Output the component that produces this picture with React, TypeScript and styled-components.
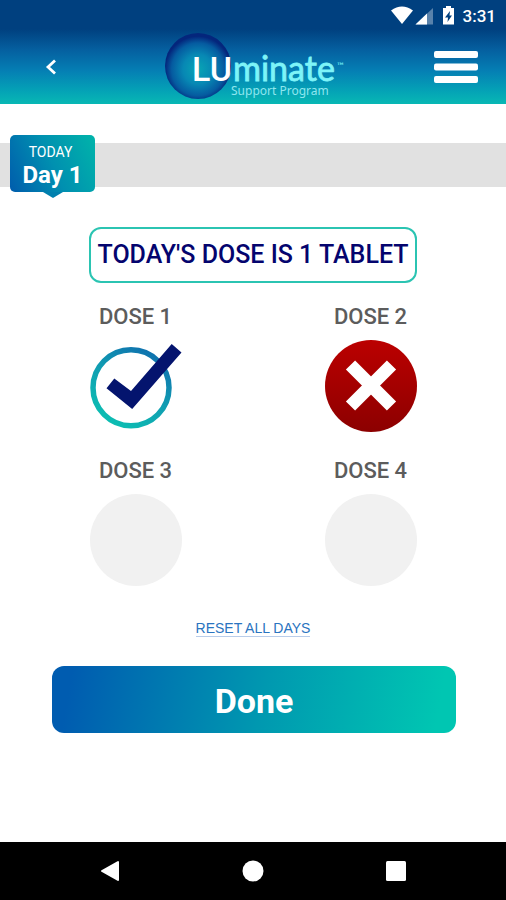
import React from "react";
import styled, { createGlobalStyle } from "styled-components";

const GlobalStyle = createGlobalStyle`
  *, *::before, *::after { box-sizing: border-box; }
  body { margin: 0; background: #fff; font-family: Roboto, sans-serif; }
  button { font-family: inherit; border: 0; padding: 0; background: none; cursor: pointer; }
`;

const Screen = styled.div`
  display: flex;
  flex-direction: column;
  min-height: 100vh;
`;

const Header = styled.header`
  background: linear-gradient(180deg, #00407f 0%, #00407f 28%, #0560a0 48%, #057fb4 68%, #04a0b6 86%, #08b8b4 100%);
`;

const StatusBar = styled.div`
  display: flex;
  justify-content: flex-end;
  align-items: center;
  height: 32px;
  padding-right: 10px;
  color: #fff;
  font-size: 17px;
  font-weight: 500;
  line-height: 32px;
`;

const StatusIcons = styled.svg`
  display: block;
  margin-right: 8px;
`;

const AppBar = styled.div`
  display: grid;
  grid-template-columns: 1fr auto 1fr;
  align-items: center;
  height: 72px;
  padding: 0 28px 2px 36px;
`;

const IconButton = styled.button<{ $end?: boolean }>`
  display: flex;
  justify-self: ${(p) => (p.$end ? "end" : "start")};
`;

const Logo = styled.svg`
  display: block;
`;

const Main = styled.main`
  display: flex;
  flex-direction: column;
  flex: 1;
`;

const DayStrip = styled.div`
  display: flex;
  align-items: flex-start;
  height: 44px;
  margin-top: 39px;
  padding-left: 10px;
  background: #e1e1e1;
`;

const DayTag = styled.button`
  position: relative;
  width: 85px;
  height: 57px;
  margin-top: -8px;
  border-radius: 5px;
  background: linear-gradient(65deg, #005cac 0%, #0090b0 50%, #00b4aa 100%);
  color: #fff;

  &::after {
    content: "";
    position: absolute;
    top: 100%;
    left: 50%;
    margin-left: -10px;
    border: 10px solid transparent;
    border-top: 6px solid #0080ae;
    border-bottom: 0;
  }
`;

const TagCaption = styled.span`
  display: block;
  padding: 4px 4px 0 0;
  font-size: 14px;
  line-height: 18px;
`;

const TagDay = styled.span`
  display: block;
  font-size: 24px;
  font-weight: 700;
  line-height: 28px;
`;

const DoseBanner = styled.h1`
  align-self: center;
  margin: 40px 0 0;
  padding: 0 6px;
  border: 2px solid #2bc4b2;
  border-radius: 12px;
  color: #04046e;
  font-size: 25px;
  font-weight: 500;
  line-height: 52px;
`;

const DoseGrid = styled.div`
  display: grid;
  grid-template-columns: 1fr 1fr;
  row-gap: 26px;
  margin-top: 21px;
  padding: 0 18px;
`;

const DoseCell = styled.div`
  display: flex;
  flex-direction: column;
  align-items: center;
  gap: 10px;
`;

const DoseLabel = styled.label`
  color: #5c5c5c;
  font-size: 22px;
  font-weight: 500;
  line-height: 26px;
`;

const DoseButton = styled.button`
  width: 92px;
  height: 92px;
  border-radius: 50%;
`;

const ResetLink = styled.a`
  align-self: center;
  margin-top: 34px;
  border-bottom: 1px solid #b9cdea;
  color: #2a74c0;
  font-family: "Liberation Sans", Arial, sans-serif;
  font-size: 14px;
  line-height: 16px;
  text-decoration: none;
`;

const DoneButton = styled.button`
  margin: 29px 50px 40px 52px;
  padding-top: 4px;
  border-radius: 12px;
  background: linear-gradient(100deg, #005cb0 5%, #0098b0 52%, #00c6b2 95%);
  color: #fff;
  font-size: 34px;
  font-weight: 700;
  line-height: 63px;
`;

const NavBar = styled.nav`
  display: flex;
  justify-content: center;
  gap: 112px;
  height: 58px;
  background: #000;
`;

const NavButton = styled.button`
  display: flex;
  align-items: center;
  justify-content: center;
  width: 31px;
`;

type Status = "taken" | "missed" | "empty";

const doses: { name: string; status: Status }[] = [
  { name: "DOSE 1", status: "taken" },
  { name: "DOSE 2", status: "missed" },
  { name: "DOSE 3", status: "empty" },
  { name: "DOSE 4", status: "empty" },
];

function DoseIcon({ status }: { status: Status }) {
  return (
    <svg width="92" height="92" viewBox="0 0 92 92" display="block" aria-hidden="true">
      <defs>
        <linearGradient id="ring" x1="0.2" y1="1" x2="0.8" y2="0">
          <stop offset="0" stopColor="#0cc0b2" />
          <stop offset="0.5" stopColor="#109fb2" />
          <stop offset="1" stopColor="#0f6fae" />
        </linearGradient>
        <linearGradient id="red" x1="0" y1="0" x2="0" y2="1">
          <stop offset="0" stopColor="#bb0000" />
          <stop offset="1" stopColor="#8c0000" />
        </linearGradient>
      </defs>
      {status === "taken" && (
        <>
          <circle cx="41" cy="47.800" r="38" fill="none" stroke="url(#ring)" strokeWidth="5.5" />
          <path d="M81.700 4 L91.500 12.500 L42.200 69 L16.500 48.300 L24.300 38.500 L41 51 Z" fill="#04146e" />
        </>
      )}
      {status === "missed" && (
        <>
          <circle cx="46" cy="46" r="46" fill="url(#red)" />
          <path d="M25.500 25 L66.500 66 M66.500 25 L25.500 66" stroke="#fff" strokeWidth="13" />
        </>
      )}
      {status === "empty" && <circle cx="46" cy="46" r="46" fill="#f1f1f1" />}
    </svg>
  );
}

function LogoMark() {
  return (
    <Logo width="186" height="68" viewBox="0 0 186 68" role="img" aria-label="LUminate Support Program">
      <defs>
        <radialGradient id="orb" cx="0.5" cy="0.55" r="0.5">
          <stop offset="0" stopColor="#08a5b4" />
          <stop offset="0.45" stopColor="#0788b4" />
          <stop offset="0.8" stopColor="#055ba0" />
          <stop offset="1" stopColor="#04267c" />
        </radialGradient>
      </defs>
      <circle cx="34" cy="33" r="33" fill="url(#orb)" />
      <text x="28" y="48" fill="#fff" fontFamily="Roboto, sans-serif" fontWeight="500" fontSize="34">LU</text>
      <text x="69" y="48" fill="#7df4f8" stroke="#7df4f8" strokeWidth="0.8" fontFamily="Lato, sans-serif" fontSize="34">minate</text>
      <text x="173" y="36" fill="#7df4f8" fontFamily="Lato, sans-serif" fontSize="9">™</text>
      <text x="67" y="62" fill="#8fe6ee" fontFamily="Noto Sans, sans-serif" fontSize="12">Support Program</text>
    </Logo>
  );
}

export default function App() {
  return (
    <Screen>
      <GlobalStyle />
      <Header>
        <StatusBar>
          <StatusIcons width="64" height="20" viewBox="0 0 64 20" aria-hidden="true">
            <path d="M0 4.500 Q11 -3.500 22 4.500 L11 18 Z" fill="#fff" />
            <path d="M42 2 V18.500 H24.500 Z" fill="#fff" opacity="0.35" />
            <path d="M36 7.500 V18.500 H24.500 Z" fill="#fff" />
            <path d="M55 0 H60 V2 H63 V18.500 H52 V2 H55 Z" fill="#fff" />
            <path d="M59 5 L54 11.500 H57 L56.500 16 L61 9.500 H58.500 Z" fill="#00407f" />
          </StatusIcons>
          3:31
        </StatusBar>
        <AppBar>
          <IconButton aria-label="Back">
            <svg width="30" height="30" viewBox="0 0 30 30" fill="none" stroke="#fff" strokeWidth="2.800">
              <path d="M19 8.500 L12 15 L19 21.500" />
            </svg>
          </IconButton>
          <LogoMark />
          <IconButton aria-label="Menu" $end>
            <svg width="44" height="32" viewBox="0 0 44 32" fill="#fff">
              <rect width="44" height="7" rx="2" />
              <rect y="12.500" width="44" height="7" rx="2" />
              <rect y="25" width="44" height="7" rx="2" />
            </svg>
          </IconButton>
        </AppBar>
      </Header>
      <Main>
        <DayStrip>
          <DayTag>
            <TagCaption>TODAY</TagCaption>
            <TagDay>Day 1</TagDay>
          </DayTag>
        </DayStrip>
        <DoseBanner>TODAY'S DOSE IS 1 TABLET</DoseBanner>
        <DoseGrid>
          {doses.map((dose, i) => (
            <DoseCell key={dose.name}>
              <DoseLabel htmlFor={`dose-${i}`}>{dose.name}</DoseLabel>
              <DoseButton id={`dose-${i}`}>
                <DoseIcon status={dose.status} />
              </DoseButton>
            </DoseCell>
          ))}
        </DoseGrid>
        <ResetLink href="#reset">RESET ALL DAYS</ResetLink>
        <DoneButton>Done</DoneButton>
      </Main>
      <NavBar>
        <NavButton aria-label="Back">
          <svg width="20" height="22" viewBox="0 0 20 22" fill="#fff" stroke="#fff" strokeWidth="2" strokeLinejoin="round">
            <path d="M18 2 V20 L2 11 Z" />
          </svg>
        </NavButton>
        <NavButton aria-label="Home">
          <svg width="22" height="22" viewBox="0 0 22 22" fill="#fff">
            <circle cx="11" cy="11" r="10.500" />
          </svg>
        </NavButton>
        <NavButton aria-label="Recent apps">
          <svg width="20" height="20" viewBox="0 0 20 20" fill="#fff">
            <rect width="20" height="20" rx="1.500" />
          </svg>
        </NavButton>
      </NavBar>
    </Screen>
  );
}
